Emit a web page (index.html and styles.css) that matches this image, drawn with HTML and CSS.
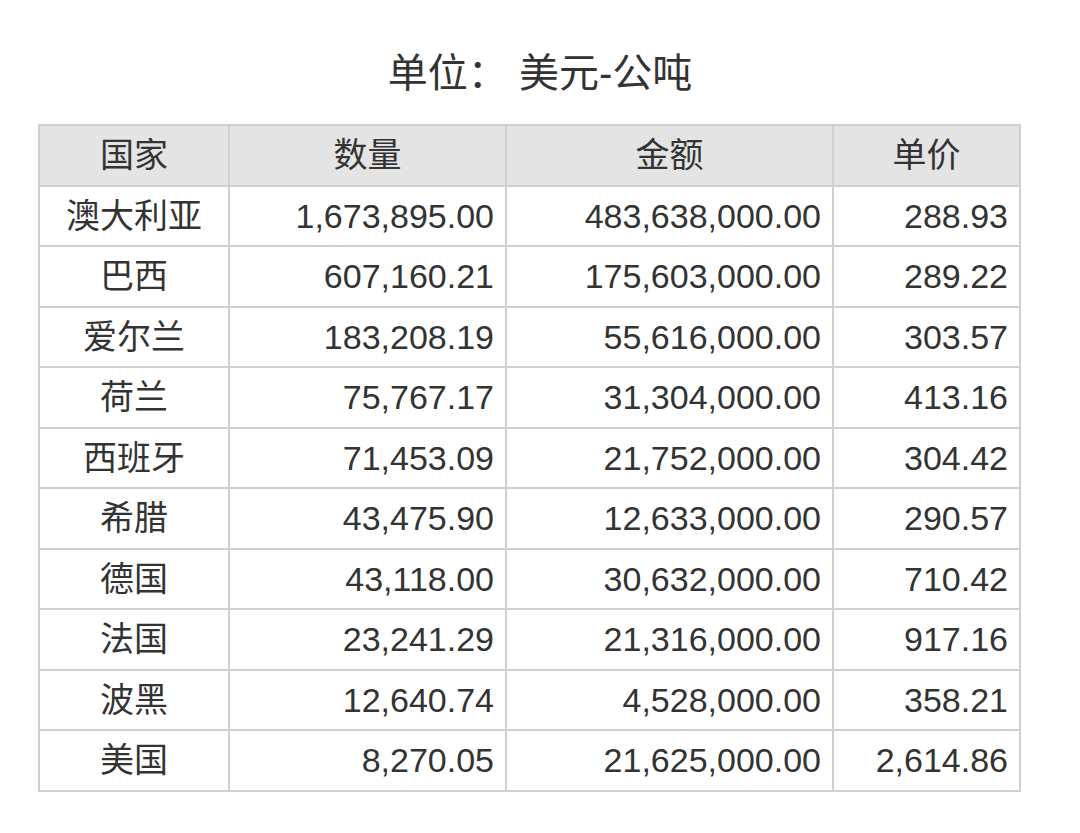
FILE: index.html
```html
<!DOCTYPE html>
<html lang="zh">
<head>
<meta charset="utf-8">
<link rel="stylesheet" href="styles.css">
</head>
<body>
<div class="page">
  <h1 class="title">单位： 美元-公吨</h1>
  <table class="data">
    <thead>
      <tr><th class="c1">国家</th><th class="c2">数量</th><th class="c3">金额</th><th class="c4">单价</th></tr>
    </thead>
    <tbody>
      <tr><td class="name">澳大利亚</td><td>1,673,895.00</td><td>483,638,000.00</td><td>288.93</td></tr>
      <tr><td class="name">巴西</td><td>607,160.21</td><td>175,603,000.00</td><td>289.22</td></tr>
      <tr><td class="name">爱尔兰</td><td>183,208.19</td><td>55,616,000.00</td><td>303.57</td></tr>
      <tr><td class="name">荷兰</td><td>75,767.17</td><td>31,304,000.00</td><td>413.16</td></tr>
      <tr><td class="name">西班牙</td><td>71,453.09</td><td>21,752,000.00</td><td>304.42</td></tr>
      <tr><td class="name">希腊</td><td>43,475.90</td><td>12,633,000.00</td><td>290.57</td></tr>
      <tr><td class="name">德国</td><td>43,118.00</td><td>30,632,000.00</td><td>710.42</td></tr>
      <tr><td class="name">法国</td><td>23,241.29</td><td>21,316,000.00</td><td>917.16</td></tr>
      <tr><td class="name">波黑</td><td>12,640.74</td><td>4,528,000.00</td><td>358.21</td></tr>
      <tr><td class="name">美国</td><td>8,270.05</td><td>21,625,000.00</td><td>2,614.86</td></tr>
    </tbody>
  </table>
</div>
</body>
</html>
```
FILE: styles.css
```css
html, body {
  margin: 0;
  padding: 0;
  background: #ffffff;
}
.page {
  width: 1080px;
  height: 833px;
  padding-top: 46px;
  box-sizing: border-box;
  font-family: "Liberation Sans", "Noto Sans CJK SC", sans-serif;
  color: #333333;
}
.title {
  margin: 0;
  height: 78px;
  font-size: 40px;
  font-weight: normal;
  line-height: 54px;
  text-align: center;
  white-space: pre;
  color: #333333;
}
.data {
  margin-left: 38px;
  width: 981px;
  border-collapse: collapse;
  table-layout: fixed;
  font-size: 34px;
}
.c1 { width: 190px; }
.c2 { width: 277px; }
.c3 { width: 327px; }
.c4 { width: 187px; }
.data th, .data td {
  border: 2px solid #d0d0d0;
  height: 60.5px;
  padding: 0 11px;
  box-sizing: border-box;
  line-height: 40px;
}
.data th {
  background: #e4e4e4;
  font-weight: normal;
  text-align: center;
}
.data td {
  text-align: right;
}
.data td.name {
  text-align: center;
}
```
